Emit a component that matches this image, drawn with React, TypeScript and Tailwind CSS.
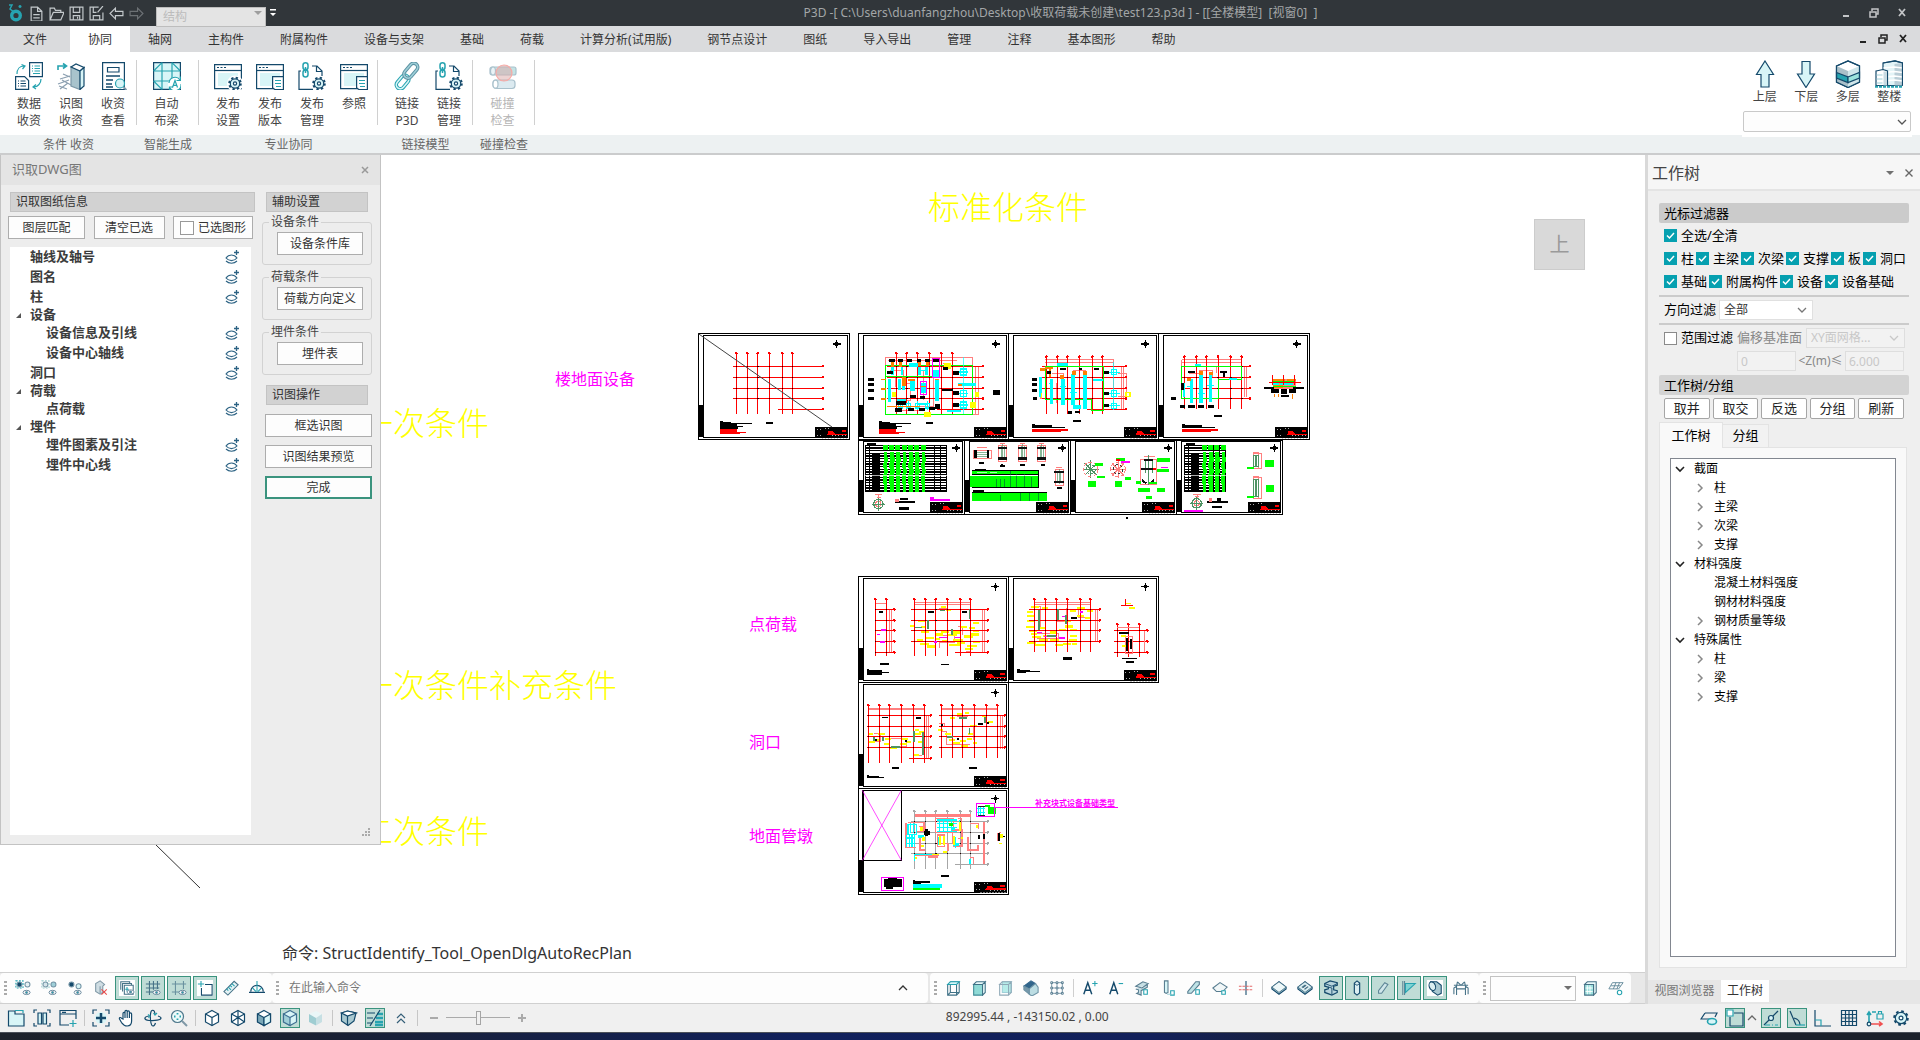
import type { ReactNode } from "react";

// ── Palette shared by the icon drawings ──────────────────────────────────────
const N = "#14496b";
const T = "#26a3b0";
const P = "#d8f5f7";
const M = "#9fcfd8";

const uiFont = "font-['Noto_Sans','Noto_Sans_CJK_SC',sans-serif]";

type IconProps = { box?: number; size?: string; children: ReactNode };

function Icon({ box = 18, size = "size-[18px]", children }: IconProps) {
  return (
    <svg viewBox={`0 0 ${box} ${box}`} className={`${size} shrink-0`} fill="none" stroke={N} strokeWidth="1.2" aria-hidden="true">
      {children}
    </svg>
  );
}

function Gear({ x, y, r = 5 }: { x: number; y: number; r?: number }) {
  const step = (2 * Math.PI * (r + 0.8)) / 16;
  return (
    <g>
      <circle cx={x} cy={y} r={r + 0.8} strokeWidth="2" strokeDasharray={`${step} ${step}`} />
      <circle cx={x} cy={y} r={r - 0.3} fill={P} />
      <circle cx={x} cy={y} r={r * 0.32} fill="#fff" />
    </g>
  );
}

// ── Ribbon icons (28px) ──────────────────────────────────────────────────────
const windowShape = (
  <>
    <path d="M.6 2.6h26.8v24H.6z" fill="#fff" />
    <path d="M4 11h20v13H4z" fill={P} stroke="none" />
    <path d="M.6 8.5h26.8" />
    <path d="M3 5.5h2M6.5 5.5h2M10 5.5h2" />
  </>
);

const chainDoc = (
  <>
    <path d="M3 9H1v18.4h14M14 4h5l5 5v5M18.5 4v5.5H24" />
    <g stroke={T} strokeWidth="1.5">
      <rect x="5" y="0.8" width="5" height="7" rx="2.5" />
      <rect x="5" y="8" width="5" height="7" rx="2.5" />
      <path d="M7.5 5v6" />
    </g>
    <Gear x={21} y={21.5} />
  </>
);

const windowDoc = (
  <>
    {windowShape}
    <path d="M16.6 14.6H27.4v13H19l-2.4-2z" fill="#fff" />
    <path d="M19 18.5h6M19 21.5h6M20 24.5h5" stroke={T} />
  </>
);

const ribbonIcons: Record<string, ReactNode> = {
  data: (
    <>
      <path d="M14.6.6h12.8v14H14.6z" fill="#fff" />
      <path d="M17 4h1M19.5 4h5.5M17 6.5h1M19.5 6.5h5.5M17 9h1M19.5 9h5.5M18 11.5h7" stroke={T} />
      <path d="M.6 14.6h9l4 4v8.8H.6z" fill="#fff" />
      <path d="M3 19h1M5.5 19h5M3 21.5h1M5.5 21.5h5.5M3 24h1M5.5 24h5.5" />
      <path d="M2 12c0-5 3-8 7-8M6.5 2.5 10 4 7.5 7M26 17c0 4-3 8-7 8M21 22.5l-3 2.5 3 2" stroke={T} />
    </>
  ),
  recognise: (
    <>
      <path d="M1 8V4h7M6 1.5 9.5 4 6 6.5" stroke={T} strokeWidth="1.6" />
      <path d="M6 12l7 3M3 17l10-3M5 18l9 5M1 22l11-4M2 24l8 3M3 27l8-6" stroke="#8b9fb0" />
      <path d="M14 5l9 4v18.5L14 24z" fill="#a8c3cc" stroke="#7c98a7" />
      <path d="M14 5l5-3 8 3.5-4 3.5z" fill="#fff" />
      <path d="M23 9l4-3.5V24l-4 3.5z" fill={P} />
    </>
  ),
  review: (
    <>
      <path d="M3.6.6h21.8v27H3.6z" fill="#fff" />
      <path d="M8.5 5.5h11.5v4.5H8.5z" />
      <path d="M7 14h14M7 18h7M7 22h6M7 25h7" strokeWidth="1.5" />
      <circle cx="21" cy="21.5" r="4.5" fill={P} stroke={T} />
      <path d="M24.5 25l3 3" stroke="#7c98a7" strokeWidth="1.8" />
    </>
  ),
  autoBeam: (
    <>
      <path d="M.6.6h26.8v26.8H.6z" fill={P} />
      <path d="M.6 9h26.8M.6 19h26.8M9 .6v26.8M19 .6v26.8M.6 9 9 .6M19 .6 27.4 9M.6 19 9 27.4" stroke={T} />
      <circle cx="22" cy="22" r="7" fill="#fff" stroke="none" />
      <path d="M16 21a6 6 0 0 1 11-3M28 22a6 6 0 0 1-11 4M27.5 14.5v4h-4M16.5 28v-3h3.5" stroke={T} />
      <path d="M19.5 25.5 22 18.5l2.5 7M20.3 23.3h3.4" stroke={T} />
    </>
  ),
  publishSet: (
    <>
      {windowShape}
      <circle cx="21" cy="21.5" r="8" fill="#fff" stroke="none" />
      <Gear x={21} y={21.5} />
    </>
  ),
  windowDoc,
  chainDoc,
  chain: (
    <g transform="rotate(-50 14 14)" strokeWidth="3.6">
      <rect x="-1" y="10.5" width="15" height="8" rx="4" stroke={T} />
      <rect x="-1" y="10.5" width="15" height="8" rx="4" stroke={P} strokeWidth="1.6" />
      <rect x="12" y="9.5" width="17" height="8" rx="4" stroke="#5d93a3" />
      <rect x="12" y="9.5" width="17" height="8" rx="4" stroke={M} strokeWidth="1.6" />
    </g>
  ),
  clash: (
    <>
      <rect x="1" y="5" width="26" height="8" rx="2" fill="#c2e3e4" stroke="#a9c1cc" />
      <rect x="4" y="18" width="22" height="8.5" rx="3" fill="#dceaf0" stroke="#a9c1cc" />
      <ellipse cx="4" cy="9" rx="2.5" ry="4" fill="#eaf3f6" stroke="#a9c1cc" />
      <ellipse cx="6.5" cy="22.2" rx="2.5" ry="4" fill="#fff" stroke="#a9c1cc" />
      <circle cx="15" cy="11" r="8" fill="#d9a8a5" fillOpacity=".5" stroke="#f7aaa6" />
    </>
  ),
  up: <path d="M14 1l8.5 13.5H18V27h-8V14.5H5.5z" fill={P} />,
  down: <path d="M14 27.5 22.5 14H18V1.5h-8V14H5.5z" fill={P} />,
  layers: (
    <>
      <path d="M2.5 6 14 1l11.5 5v16L14 27.5 2.5 22z" fill="#fff" />
      <path d="M2.5 6 14 11v16L2.5 22z" fill="#a9bfc8" stroke="none" />
      <path d="M14 11 25.5 6v16L14 27.5z" fill="#cfe6ea" stroke="none" />
      <path d="M2.5 12.5 14 17v5.5L2.5 18z" fill={T} />
      <path d="M14 17l11.5-4.5V18L14 22.5z" fill="#9be3dc" />
      <path d="M2.5 6 14 1l11.5 5v16L14 27.5 2.5 22z" />
    </>
  ),
  tower: (
    <>
      <path d="M8 3 20 .8 27.5 3v22.5H8z" fill="#e3f4f7" />
      <path d="M19.5 4 27.5 3v22.5h-8z" fill="#b9cdd6" stroke="none" />
      <path d="M8.5 8l11-1 8 1M8.5 12.5l11-1 8 1M8.5 17l11-1 8 1M8.5 21l11-1 8 1" stroke="#fff" strokeWidth="1.6" />
      <path d="M8 3 20 .8 27.5 3v22.5" />
      <path d="M1 11l7-1.5 4.5 1.5v14.5H1z" fill="#fff" />
      <path d="M1.5 15h6M1.5 19h6M1.5 23h6" stroke={M} />
      <path d="M8.5 11.5h3.5v14H8.5z" fill="#c9dbe2" stroke="none" />
      <path d="M0 26.8h28" stroke={T} strokeWidth="2" strokeDasharray="3 1" />
    </>
  ),
};

// ── Small tool icons (18px) ──────────────────────────────────────────────────
const hex = "M9 1.5 15.5 5v8L9 16.5 2.5 13V5z";
const eye = (x: number, y: number) => (
  <g transform={`translate(${x} ${y})`} stroke="#5f8196" strokeWidth="1">
    <ellipse cx="0" cy="0" rx="4" ry="2.4" fill="#fff" />
    <circle cx="0" cy="0" r="1.2" fill={T} />
  </g>
);
const dot = (x: number, y: number, fill: string) => <circle cx={x} cy={y} r="2.8" fill={fill} stroke="#7394a5" />;

const smallIcons: Record<string, ReactNode> = {
  selA: <>{dot(5, 5, N)}<path d="M1 1h8v8H1z" stroke={T} strokeDasharray="2 1.5" />{dot(14, 5, "#e6f1f4")}{eye(13, 14)}</>,
  selB: <>{dot(5, 5, "#d5e5ea")}<path d="M1 1h8v8H1z" stroke="#9cc" strokeDasharray="2 1.5" />{dot(14, 5, M)}{eye(13, 14)}</>,
  selC: <>{dot(5, 5, N)}{dot(13, 7, P)}{eye(12, 14)}</>,
  bodyDel: <><path d="M8 1 3 4v9l5 3 3-2V7l2-2z" fill="#cfdde3" stroke="#7f98a6" /><path d="M8 7v8" stroke="#7f98a6" /><path d="m9.5 10.5 6 6m0-6-6 6" stroke="#e84a4a" /></>,
  layerEye: <><path d="M0 0h18v18H0z" fill="#fff" stroke="none" /><path d="M2 11V2h10v2M4 13V4h10v2M6 6h10v10H6z" stroke="#467287" /><path d="M9 8v5m-2-2.5h4" stroke={T} />{eye(13, 13.5)}</>,
  gridEye: <><path d="M5 1v16M9.5 1v10M14 1v9M1 4.5h16M1 9h15M1 13.5h8" stroke="#467287" />{eye(13, 14)}</>,
  axisEye: <><path d="M5 1v16M14 1v9M1 4.5h16M1 13.5h8" stroke="#69909f" />{eye(13, 14)}</>,
  axisAdd: <><path d="M0 0h18v18H0z" fill="#fff" stroke="none" /><path d="M9 5h8v12H5V9" /><path d="M4.5 1v7M1 4.5h7" stroke={T} /></>,
  ruler: <><path d="M1 13 12.5 1.5l4.5 4L5.5 17z" fill="#e5f3f5" stroke="#467287" /><path d="m4 10 2 2m0-4 3 3m-1-5 2 2m0-4 3 3" stroke={T} /></>,
  protractor: <><path d="M2 13a7 7 0 0 1 14 0M0 14h18" strokeWidth="1.4" /><path d="M9 1v12M4 9l4 4m6-4-4 4" stroke={T} /></>,
  cubeWire: <><path d="M3 5h10v12H3zM6 2h10v12l-3 3M6 2v12h10M6 14l-3 3" stroke="#3f7186" /><path d="M3 5h10l3-3H6z" fill={P} stroke={T} /></>,
  cubeSolid: <><path d="M3 5h10v12H3z" fill="#8fdad6" stroke="#3f8a96" /><path d="m3 5 3-3h10l-3 3zM16 2v12l-3 3V5z" fill="#eafafa" stroke="#3f7186" /></>,
  cubeBack: <><path d="M6 2h10v12H6z" fill="#b6ece9" stroke={M} /><path d="M3 5h10v12H3zm0 0 3-3h10l-3 3zM16 2v12l-3 3" stroke="#8fa9b7" /></>,
  cubeDark: <><path d="m1 7 8-6 5 3-7 6z" fill="#31658b" stroke="#31658b" /><path d="m7 10 7-6 3 4v6l-7 4-3-2z" fill="#bcdde3" stroke="#6d93a5" /><path d="M1 7v4l6 5v-6z" fill="#7698ab" stroke="#6d93a5" /></>,
  lattice: <><path d="M3 3h12v12H3zM9 3v12M3 9h12" stroke="#6f8fa1" strokeWidth="1" /><path d="M2 2h2v2H2zm6 0h2v2H8zm6 0h2v2h-2zM2 8h2v2H2zm6 0h2v2H8zm6 0h2v2h-2zM2 14h2v2H2zm6 0h2v2H8zm6 0h2v2h-2z" fill="#fff" stroke="#4b7388" strokeWidth="1" /></>,
  fontUp: <><path d="M2 16 6.5 3 11 16M3.5 11.5h6" strokeWidth="1.6" /><path d="M14.5 1v6M11.5 4h6" stroke={T} /></>,
  fontDown: <><path d="M2 16 6.5 3 11 16M3.5 11.5h6" strokeWidth="1.6" /><path d="M12 4h5" stroke={T} /></>,
  beamTag: <><path d="m2 7 8-5 6 2-7 5zM2 10l3 1v3l-2 1 5 2v-5l7-4V5" fill="#c7dfe4" stroke="#587d90" /><path d="M11 11h4v5h-4z" fill="#fff" stroke={T} /></>,
  colTag: <><path d="M5 1h4v13l-2 1-2-1z" fill={P} stroke="#587d90" /><path d="M12 12h4v5h-4z" stroke={T} /><path d="M8 16h4" stroke={M} /></>,
  braceTag: <><path d="m2 13 9-11h4v3L6 15H2z" fill="#bfe3e6" stroke="#587d90" /><path d="M11 11h4v5h-4z" fill="#fff" stroke={T} /></>,
  slabTag: <><path d="m1 9 8-6 8 5-5 5H5z" fill="#f1f7f8" stroke="#587d90" /><path d="M11 12h4v4h-4z" fill="#fff" stroke={T} /></>,
  joint: <><path d="M9 1v16" /><path d="M1 7h16M1 11h16" stroke="#e46a6a" strokeDasharray="3 1" /></>,
  slab: <><path d="m1 8 8-6 8 6v2l-8 6-8-6z" fill="#a9ccd4" /><path d="m1 8 8-6 8 6-8 6z" fill="#eef8f9" stroke="#467287" strokeWidth="1" /></>,
  slabHole: <><path d="m1 8 8-6 8 6v2l-8 6-8-6z" fill="#a9ccd4" /><path d="m1 8 8-6 8 6-8 6z" fill="#dbeef1" stroke="#467287" strokeWidth="1" /><path d="m5 8 4-3 4 3-4 3z" fill="#467287" stroke="none" /><path d="M7 10l5-4" stroke="#fff" /></>,
  beam: <><path d="m2 4 6-3 8 2v3l-4 1v4l4 1v2l-6 3-8-3v-3l4-1V8L2 7z" fill="#b7d4dc" strokeWidth="1.4" /><path d="m2 4 8 3 6-3M6 8l4 1v7" strokeWidth="1" /></>,
  column: <><path d="M6 3.5 9 1l3 2.5v11L9 17l-3-2.5z" fill="#dbeef1" strokeWidth="1.3" /><path d="M6 4l3 2 3-2" strokeWidth="1" /></>,
  brace: <path d="m4 12 7-9 3.5 2L7.5 15 4 15z" fill="#cfe6ea" stroke="#5d8596" />,
  flag: <><path d="M4 1v16M2 1v16" stroke="#5d8596" /><path d="M5 4h11L5 14z" fill="#7fd3d3" stroke={T} /></>,
  pipe: <><path d="M0 0h18v18H0z" fill="#fff" stroke="none" /><path d="M4 2h7l5 4v9l-4 2-6-4z" fill="#a9c8d1" /><ellipse cx="6" cy="7" rx="3.5" ry="5" fill="#dbeef1" transform="rotate(-20 6 7)" /></>,
  truss: <path d="M4 17V7l1-5M14 17V7l-1-5M1 6h16M4 10h10M1 16V9l3-2m13 9V9l-3-2M5 2l4 4 4-4" stroke="#467287" />,
  sheetGrid: <><path d="m3 5 3-3h10v12l-3 3V5z" fill="#eafafa" stroke="#467287" /><path d="M3 5h10v12H3z" fill="#9de2df" stroke="#467287" /><path d="M6 6v10m3-10v10M4 9h8M4 13h8" stroke="#fff" strokeWidth="1" /></>,
  sheetEye: <><path d="m5 3-4 7h11l5-7zM3.5 6.5H14M9 3l-3 7m7-7-3 7" stroke="#5d8596" strokeWidth="1" /><circle cx="13" cy="14" r="2.5" fill="#fff" stroke={T} /></>,
  folder: <><path d="M1.5 2H8v3h9v12H1.5z" fill={P} /><path d="M8 1.5h8V4" stroke={T} /></>,
  tiles: <><path d="M5 4h3.5v11H5zM10 4h3.5v11H10z" fill={P} /><path d="M4 1H1v3m0 10v3h3M14 1h3v3m0 10v3h-3" /></>,
  windowAdd: <><path d="M17 10V1.5H1V16h9M1 5h16M3 3.3h4" /><path d="M14 11v7m-3.5-3.5h7" stroke={T} /></>,
  fit: <><path d="M1 5V1h4M13 1h4v4M1 13v4h4m8 0h4v-4" /><circle cx="9" cy="9" r="6" fill={P} stroke="none" /><path d="M9 4v10M4 9h10" strokeWidth="2.5" /></>,
  hand: <path d="M5 10V4.5c0-1.5 2-1.5 2 0V9 2.5c0-1.5 2.2-1.5 2.2 0V9 3c0-1.5 2.2-1.5 2.2 0v6-4c0-1.5 2.2-1.5 2.2 0v7c0 3-1.5 5-4.5 5S5 15.5 3.5 13.5L1.5 10c-.5-1.5 1-2 2-.8z" fill="#fff" />,
  orbit: <><path d="M11 5c-.5-5-4-5-4.5 0-.5 6 .5 12 2.5 12 1.5 0 2-1.5 2.5-3M5 7c-6 1-5 4 0 4.5 6 .5 12-.5 12-2.5 0-1-1.5-1.5-3-2" /><path d="m9.5 4 1.5 2 2-2M4 5.5 6 7 4.5 9" stroke={T} /></>,
  zoom: <><circle cx="7.5" cy="7.5" r="6" fill="#eefafa" stroke="#4e788c" /><path d="M7.5 4v1.5m0 4V11M4 7.5h1.5m4 0H11" stroke={T} strokeWidth="1.8" /><path d="m12 12 5 5" strokeWidth="2" stroke="#7f98a6" /></>,
  isoWire: <><path d={hex} fill="#fff" /><path d="M2.5 5 9 8.5 15.5 5M9 8.5v8" /></>,
  isoFull: <><path d={hex} fill="#fff" /><path d="M2.5 5 9 8.5 15.5 5M9 1.5v15M2.5 13 9 8.5l6.5 4.5" /></>,
  isoHalf: <><path d={hex} fill="#fff" /><path d="M2.5 5 9 8.5v8L2.5 13z" fill="#7ba8b8" /><path d="M9 8.5 15.5 5v8L9 16.5z" fill={P} /></>,
  isoShade: <><path d={hex} fill={P} stroke="#3f7093" /><path d="M2.5 5 9 8.5v8L2.5 13z" fill={M} stroke="#3f7093" /><path d="M9 8.5 15.5 5" stroke="#3f7093" /></>,
  isoSolid: <g stroke="none"><path d="M2 5 9 2l6 3-6 4z" fill="#eaf6f7" /><path d="M2 5l7 4v7.5L2 13z" fill="#9fcdd2" /><path d="m9 9 6-4v8l-6 3.5z" fill="#c6dfe3" /></g>,
  clip: <><path d="m1.5 4 6-2L16 4l-2 8-6 4.5L1.5 12z" fill="#a8c8d0" /><path d="m1.5 4 6-2L16 4 7.5 7z" fill="#fff" /><path d="M7.5 7v9" /></>,
  hatch: <><path d="M1 4h8M1 9h6M1 14h5" /><path d="M11 5h6M10 9h7M9 13h8M9 16h8" stroke={T} strokeWidth="2.4" /><path d="M4 17 14 1" /></>,
  collapse: <path d="m5 9 4-4 4 4M5 14l4-4 4 4" stroke="#355f78" />,
  planeEye: <><path d="m5 4-4 6h9m5-6H5m10 0h2l-2 4" /><ellipse cx="12" cy="12.5" rx="4.5" ry="3" fill={P} stroke={T} strokeWidth="1.6" /></>,
  snapBox: <><path d="M8 4h9v13H4V8" /><path d="M1 1h6v6H1z" fill="#fff" stroke={T} /></>,
  snapMid: <><path d="M2 16 16 2" /><circle cx="9" cy="9" r="2.5" fill={P} /><path d="M3 16h13" stroke={T} strokeDasharray="5 2 1 2" /></>,
  snapAngle: <><path d="M2 2 8 16M6 9c4 1 6 4 6 7" /><path d="M8 16h9" stroke={T} /></>,
  ortho: <><path d="M1 1v16h16" /><path d="M1 11h6v6" stroke={T} /></>,
  grid: <path d="M1.5 1.5h15v15h-15zM5.5 1v16M9 1v16M12.5 1v16M1 5.5h16M1 9h16M1 12.5h16" />,
  lockAxis: <><path d="M3 16V4M1 6l2-3 2 3M6 3h4" stroke={T} strokeWidth="1.6" /><path d="M5 15h10M13 12.5l3 2.5-3 2" stroke="#f05050" strokeWidth="1.6" /><circle cx="3" cy="15" r="1.8" fill={P} /><path d="M11 5h6v5h-6zM12.5 5V2.5h3V5" stroke={T} /></>,
  gear: <Gear x={9} y={9} r={6} />,
};

const caret = (
  <svg viewBox="0 0 8 4" className="h-1 w-2 fill-[#707070]" aria-hidden="true"><path d="M0 0h8L4 4z" /></svg>
);
const chevron = (
  <svg viewBox="0 0 10 6" className="h-[6px] w-[10px] fill-none stroke-current" aria-hidden="true"><path d="m1 1 4 4 4-4" strokeWidth="1.3" /></svg>
);

// ── Title bar ────────────────────────────────────────────────────────────────
const quickIcons: { label: string; art: ReactNode; faint?: boolean }[] = [
  { label: "新建", art: <path d="M2 1h6l4 4v9H2zM8 1v4h4M4 8h6M4 11h6" /> },
  { label: "打开", art: <path d="M1 13V2h4l1 2h5v2M1 13 4 6h10l-3 7z" /> },
  { label: "保存", art: <path d="M1 1h12v12H1zM4 1v5h6V1M4 13V9h6v4M8 10v2" /> },
  { label: "另存为", art: <path d="M9 1H1v12h12V6M4 1v5h3M4 13V9h6v4M13 0 8 6" /> },
  { label: "撤销", art: <path d="M1 7l5-5v3h7v4H6v3z" /> },
  { label: "重做", art: <path d="M13 7 8 2v3H1v4h7v3z" />, faint: true },
];

function WindowControls({ tone }: { tone: string }) {
  return (
    <>
      <button aria-label="最小化" className={tone}><svg viewBox="0 0 10 10" className="size-[10px]"><path d="M2 7h6v2H2z" fill="currentColor" /></svg></button>
      <button aria-label="还原" className={tone}><svg viewBox="0 0 10 10" className="size-[10px]" fill="none" stroke="currentColor" strokeWidth="1.5"><path d="M3 3V1h6v5H7M1 4h6v5H1z" /></svg></button>
      <button aria-label="关闭" className={tone}><svg viewBox="0 0 10 10" className="size-[10px]" fill="none" stroke="currentColor" strokeWidth="1.8"><path d="m2 1 6 7m0-7L2 8" /></svg></button>
    </>
  );
}

function TitleBar() {
  return (
    <header className="flex h-[26px] shrink-0 items-center bg-[#31363a]">
      <svg viewBox="0 0 16 18" className="ml-2 h-[18px] w-4 shrink-0" aria-hidden="true">
        <circle cx="8" cy="11.5" r="4.3" fill="none" stroke={T} strokeWidth="3.4" />
        <path d="M1 1h3L2 5l4 3M12 1v3m-1.5-1.5h3" fill="none" stroke={T} strokeWidth="1.5" />
      </svg>
      <div className="ml-[2px] flex">
        {quickIcons.map((q) => (
          <button key={q.label} aria-label={q.label} className="flex w-5 justify-center">
            <svg viewBox="0 0 14 14" className={`size-[15px] fill-none stroke-[#c4c9cc] ${q.faint ? "opacity-40" : ""}`} strokeWidth="1.1">{q.art}</svg>
          </button>
        ))}
      </div>
      <div className="relative ml-[10px] h-5 w-[110px] shrink-0">
        <select aria-label="专业" disabled className="size-full appearance-none border border-[#bdbdbd] bg-[#e4e4e4] pl-[6px] text-xs leading-4 text-[#bcbcbc] opacity-100">
          <option>结构</option>
        </select>
        <span className="pointer-events-none absolute top-2 right-1 opacity-60">{caret}</span>
      </div>
      <svg viewBox="0 0 6 8" className="ml-1 h-2 w-[6px] fill-white" aria-hidden="true"><path d="M0 0h6v1.5H0zM0 4h6L3 7z" /></svg>
      <h1 className="flex-1 truncate pl-1 text-center text-xs whitespace-pre text-[#a3a6a8]">
        {"P3D -[ C:\\Users\\duanfangzhou\\Desktop\\收取荷载未创建\\test123.p3d ] - [[全楼模型]  [视窗0]  ]"}
      </h1>
      <div className="flex gap-[18px] pr-[13px]"><WindowControls tone="flex text-[#c3c5c7]" /></div>
    </header>
  );
}

// ── Menu ─────────────────────────────────────────────────────────────────────
const menus = ["文件", "协同", "轴网", "主构件", "附属构件", "设备与支架", "基础", "荷载", "计算分析(试用版)", "钢节点设计", "图纸", "导入导出", "管理", "注释", "基本图形", "帮助"];

function MenuBar() {
  return (
    <nav className="flex h-[26px] shrink-0 bg-[#dadbdd] text-xs text-[#333]">
      {menus.map((m, i) => (
        <button key={m} className={`pt-[2px] ${i === 0 ? "w-[70px]" : "px-[18px]"} ${i === 1 ? "bg-white" : ""}`}>{m}</button>
      ))}
      <div className="ml-auto flex items-center gap-[10px] pr-[12px]"><WindowControls tone="flex text-[#222]" /></div>
    </nav>
  );
}

// ── Ribbon ───────────────────────────────────────────────────────────────────
type RibbonItem = { icon: string; top: string; bottom?: string; disabled?: boolean };
const ribbon: { title: string; items: RibbonItem[] }[] = [
  {
    title: "条件 收资",
    items: [
      { icon: "data", top: "数据", bottom: "收资" },
      { icon: "recognise", top: "识图", bottom: "收资" },
      { icon: "review", top: "收资", bottom: "查看" },
    ],
  },
  { title: "智能生成", items: [{ icon: "autoBeam", top: "自动", bottom: "布梁" }] },
  {
    title: "专业协同",
    items: [
      { icon: "publishSet", top: "发布", bottom: "设置" },
      { icon: "windowDoc", top: "发布", bottom: "版本" },
      { icon: "chainDoc", top: "发布", bottom: "管理" },
      { icon: "windowDoc", top: "参照" },
    ],
  },
  {
    title: "链接模型",
    items: [
      { icon: "chain", top: "链接", bottom: "P3D" },
      { icon: "chainDoc", top: "链接", bottom: "管理" },
    ],
  },
  { title: "碰撞检查", items: [{ icon: "clash", top: "碰撞", bottom: "检查", disabled: true }] },
];

function Ribbon() {
  return (
    <section className="flex h-[103px] shrink-0 border-b-2 border-[#cbcccd] bg-white text-xs">
      {ribbon.map((g) => (
        <div key={g.title} className="flex min-w-[62px] flex-col">
          <div className="flex h-[83px] items-start pt-2">
            <div className={`flex h-[65px] flex-1 border-r border-[#d0d0d0] pt-[2px] pr-[2px] ${g.items.length === 1 ? "justify-center" : "pl-2"}`}>
              {g.items.map((it) => (
                <button key={it.top + it.bottom} disabled={it.disabled} className={`flex w-[42px] flex-col items-center leading-[17px] ${it.disabled ? "text-[#b5b5b5]" : "text-[#444]"}`}>
                  <span className="mb-[5px]"><Icon box={28} size="size-7">{ribbonIcons[it.icon]}</Icon></span>
                  <span>{it.top}</span>
                  <span>{it.bottom}</span>
                </button>
              ))}
            </div>
          </div>
          <div className="h-[18px] bg-[#edf1f2] pt-px text-center leading-[18px] text-[#666]">{g.title}</div>
        </div>
      ))}
      <div className="flex flex-1 flex-col items-end bg-[linear-gradient(#fff_83px,#edf1f2_83px)] pr-2">
        <div className="flex w-[170px] flex-col bg-white pt-2">
          <div className="flex px-[2px] text-[#444]">
            {[["up", "上层"], ["down", "下层"], ["layers", "多层"], ["tower", "整楼"]].map(([icon, label]) => (
              <button key={icon} className="flex flex-1 flex-col items-center leading-[18px]">
                <Icon box={28} size="size-7">{ribbonIcons[icon]}</Icon>
                {label}
              </button>
            ))}
          </div>
          <div className="relative mt-[5px] mb-[5px] ml-px h-[21px] w-[168px] text-[#555]">
            <select aria-label="楼层" className="size-full appearance-none rounded-xs border border-[#c9c9c9] bg-[#fdfdfd]"><option></option></select>
            <span className="pointer-events-none absolute top-2 right-1">{chevron}</span>
          </div>
        </div>
      </div>
    </section>
  );
}

// ── Drawing primitives ───────────────────────────────────────────────────────
const RED = "#ff0000";
const PINK = "#ff8080";
const LIME = "#00ff00";
const CYAN = "#00ffff";
const YEL = "#ffff00";
const MAG = "#ff00ff";
const ORG = "#ff8000";
const DGR = "#4f9364";

// A run of filled bars, written as "x,y,w,h x,y,w,h ..."
function Bars({ fill, at }: { fill: string; at: string }) {
  const d = at
    .split(" ")
    .map((b) => b.split(","))
    .map(([x, y, w, h]) => `M${x} ${y}h${w}v${h}h-${w}z`)
    .join("");
  return <path d={d} fill={fill} />;
}

function Line({ c, d, w = 3 }: { c: string; d: string; w?: number }) {
  return <path d={d} fill="none" stroke={c} strokeWidth={w} />;
}

type GridProps = { xs: number[]; ys: number[]; x0: number; x1: number; y0: number; y1: number; short?: [number, number]; color?: string };

function AxisGrid({ xs, ys, x0, x1, y0, y1, short, color = RED }: GridProps) {
  return (
    <g>
      {xs.map((x) => <Line key={x} c={color} d={`M${x} ${y0}V${y1}`} />)}
      {ys.map((y) => <Line key={y} c={color} d={`M${x0} ${y}H${x1}`} />)}
      {short && <Line c={color} d={`M${short[0]} ${short[1]}H${x1}`} />}
      {xs.map((x) => <circle key={x} cx={x} cy={y0} r="4" fill={color} />)}
      {[...ys, ...(short ? [short[1]] : [])].map((y) => <circle key={y} cx={x1} cy={y} r="4" fill={color} />)}
      {xs.map((x) => ys.map((y) => <rect key={`${x}-${y}`} x={x - 2} y={y - 2} width="5" height="4" fill="#200" />))}
    </g>
  );
}

function Sheet({ x, y, w, h, small }: { x: number; y: number; w: number; h: number; small?: boolean }) {
  const cx = x + w - (small ? 25 : 39);
  const cy = y + (small ? 24 : 31);
  const tx = x + w - 104;
  const ty = y + h - 37;
  return (
    <g>
      <path d={`M${x} ${y}h${w}v${h}h-${w}zM${x + 14} ${y + 5}h${w - 20}v${h - 11}h-${w - 20}z`} fill="none" stroke="#000" strokeWidth="3" />
      <rect x={x} y={y + h - 103} width="14" height="97" />
      <path d={`M${cx - 12} ${cy}h24M${cx} ${cy - 12}v24`} stroke="#000" strokeWidth="4" />
      <rect x={cx - 5} y={cy - 5} width="10" height="10" />
      <rect x={tx} y={ty} width="98" height="31" />
      <path d={`M${tx + 5} ${ty + 8}h20M${tx + 30} ${ty + 5}h12M${tx + 6} ${ty + 24}h16M${tx + 50} ${ty + 26}h44`} stroke="#fff" strokeWidth="2" strokeDasharray="3 7" />
      <path d={`M${tx + 34} ${ty + 25}l6-8v-5h14l6 8h36v4h-30z`} fill={RED} />
      <rect x={tx + 80} y={ty + 9} width="13" height="6" fill={RED} />
      <path d={`M${tx + 20} ${ty + 33}h80`} stroke="#aaa" strokeWidth="2" strokeDasharray="5 4" />
    </g>
  );
}

function Notes({ x, y, long }: { x: number; y: number; long?: boolean }) {
  return (
    <g>
      <path d={long ? `M${x} ${y}h8v3h52v4h38v5h-98z` : `M${x} ${y}h8l2 3h24v3h62v3h-44v5h18v4h-16v4h-54z`} />
      <path d={long ? `M${x} ${y + 14}h108v5h-20v3h-88z` : `M${x} ${y + 24}h52v7h26v4h-18v3h-60z`} fill={RED} />
    </g>
  );
}

// Equipment schedule with its green value columns
function Schedule({ x, y, w, cols, from }: { x: number; y: number; w: number; cols: number; from: number }) {
  const rows = Array.from({ length: 17 }, (_, i) => y + 8 + i * 8);
  return (
    <g>
      <rect x={x} y={y} width={w} height="139" fill="#fff" stroke="#000" strokeWidth="3" />
      {rows.map((r) => <Line key={r} c="#000" d={`M${x} ${r}h${w}`} w={4} />)}
      <Line c="#000" d={`M${x + w - 18} ${y}v139M${x + w - 36} ${y}v139M${x + 12} ${y}v139`} />
      <Bars fill="#000" at={`${x + 20},${y + 22},${from - 28},116 ${x + 4},${y - 7},28,8`} />
      {Array.from({ length: cols }, (_, i) => (
        <g key={i}>
          <rect x={x + from + i * 19} y={y} width="15" height="14" fill={LIME} />
          <path d={`M${x + from + 3 + i * 19} ${y + 20}h11v16h3v14h-3v20h3v12h-3v57h-11v-22h-2v-30h2v-20h-2v-14h2z`} fill={LIME} />
        </g>
      ))}
      <Line c="#fff" d={`M${x} ${y + 91}h${w}`} w={2} />
    </g>
  );
}

function Column({ x, y, h = 36 }: { x: number; y: number; h?: number }) {
  return (
    <g>
      <path d={`M${x - 12} ${y - 4}h24v${h + 14}h-24zM${x - 8} ${y - 10}h16`} fill="none" stroke={PINK} strokeWidth="3" />
      <path d={`M${x - 5} ${y}v${h}M${x} ${y - 6}v${h + 12}M${x + 5} ${y}v${h}`} stroke={DGR} strokeWidth="2" />
      <path d={`M${x - 14} ${y + 4}h28M${x - 14} ${y + h}h28`} stroke="#111" strokeWidth="7" />
    </g>
  );
}

function RoundPlan({ x, y }: { x: number; y: number }) {
  return (
    <g fill="none" strokeWidth="3">
      <path d={`M${x - 10} ${y - 28}h22m-11 0v14m-6-6h12`} stroke={PINK} />
      <circle cx={x} cy={y} r="14" stroke={DGR} strokeWidth="4" />
      <circle cx={x} cy={y} r="8" stroke={PINK} />
      <path d={`M${x - 20} ${y}h40M${x} ${y - 18}v38`} stroke={DGR} />
    </g>
  );
}

// ── Upper rows of sheets ─────────────────────────────────────────────────────
function UpperSheets() {
  return (
    <svg x="690" y="320" width="640" height="200" viewBox="0 0 1920 600" shapeRendering="crispEdges">
      <Sheet x={25} y={41} w={454} h={317} />
      <AxisGrid xs={[139, 172, 203, 238, 277, 307]} ys={[139, 172, 205, 236]} x0={130} x1={399} y0={100} y1={281} short={[265, 268]} />
      <path d="M25 41 426 321" stroke="#444" strokeWidth="3" shapeRendering="auto" />
      <Notes x={90} y={304} />
      <Bars fill="#000" at="228,306,20,6" />

      <Sheet x={506} y={41} w={450} h={317} />
      <Line c={PINK} d="M586 112H847V283M586 112V280M595 122H800M865 139V283H750M855 139V283M600 150h40v20h-24v30M640 190h20v50h-30M700 150v90M730 170v90h-40M620 230v40h80M760 130h20v16" />
      <AxisGrid xs={[619, 650, 682, 718, 754, 787]} ys={[139, 172, 205, 236]} x0={590} x1={879} y0={100} y1={281} short={[740, 268]} />
      <Line c={LIME} d="M586 170V283H847V136H586v34h140" w={4} />
      <Line c={MAG} d="M728 116h20v55h-20zM691 184h19v38h-19z" />
      <Bars fill={CYAN} at="604,142,8,24 632,142,8,24 658,128,26,12 684,142,10,24 704,142,10,24 684,150,30,4 730,150,18,20 660,178,16,35 694,188,14,32 736,176,11,66 625,178,7,32 637,178,8,32 594,178,10,68 803,190,55,8 772,269,40,7 680,248,30,6 622,236,26,8" />
      <g fill="none" stroke={CYAN} strokeWidth="4">
        {[[820, 156], [820, 220], [820, 255]].map(([a, b]) => <path key={b} d={`M${a - 15} ${b}h30M${a} ${b - 15}v30M${a - 9} ${b - 9}h18v18h-18z`} />)}
        {[632, 655, 683, 712].map((a) => <path key={a} d={`M${a - 6} 250h12v14h-12zM${a} 244v26`} />)}
        <path d="M820 112V283" strokeWidth="2" />
      </g>
      <Bars fill={ORG} at="604,122,8,18 628,122,8,18 684,120,8,18 708,120,8,18 637,172,10,26 574,176,14,5 574,204,14,5 574,234,14,5 590,257,100,4 803,191,14,7 655,178,20,4 690,198,18,4 735,176,12,4" />
      <Bars fill={YEL} at="762,130,22,16 702,275,22,16 840,246,18,18 856,216,10,14 605,216,12,14" />
      <Bars fill="#000" at="598,117,16,8 623,117,16,8 652,117,14,8 682,117,12,8 704,117,16,8 730,117,18,8 788,153,18,12 788,214,18,12 788,250,18,12 618,243,30,12 660,225,18,10 690,228,16,8 615,265,20,10 655,264,16,10 688,264,16,10 735,252,14,14 535,174,16,9 535,190,16,9 535,207,16,9 535,232,18,9 910,210,20,16 755,206,35,6 590,154,18,8 760,142,14,8 716,262,20,8" />
      <Notes x={567} y={304} />
      <Bars fill="#000" at="708,306,20,6" />

      <Sheet x={956} y={41} w={449} h={317} />
      <Line c={PINK} d="M1066 119h204v150M1066 126h204M1300 140v130M1293 140v130M1285 160h24v70h-24M1050 176v60h20M1086 160h34v12M1150 152h36v20M1100 190v60M1186 180v80" />
      <AxisGrid xs={[1069, 1102, 1132, 1168, 1207, 1237]} ys={[139, 172, 205, 236]} x0={1056} x1={1308} y0={110} y1={281} short={[1190, 268]} />
      <Line c={LIME} d="M1066 139H1240V272h-36V238H1066z" />
      <Line c={CYAN} d="M1270 126V264" w={2} />
      <Bars fill={CYAN} at="1102,130,32,9 1080,176,9,76 1114,176,10,78 1144,162,12,92 1178,158,14,108 1210,177,28,6 1048,172,8,60 1150,255,24,12" />
      <g fill="none" stroke={CYAN} strokeWidth="3">
        {[156, 220, 257].map((b) => <path key={b} d={`M1255 ${b}h34M1271 ${b - 14}v28M1263 ${b - 8}h16v16h-16z`} />)}
        <path d="M1076 190h14M1110 200h18M1140 216h20" />
      </g>
      <Bars fill={ORG} at="1050,145,14,8 1076,148,8,24 1110,164,12,12 1146,152,12,12 1178,152,12,12 1066,142,22,5" />
      <Bars fill="#000" at="1026,174,16,8 1026,190,16,8 1026,207,16,8 1030,231,12,9 1243,153,14,9 1243,216,14,9 1243,252,14,9 1212,145,16,5 1110,144,18,6 1070,154,12,8 1135,273,12,9 1156,273,14,6 1149,300,24,6 1166,145,10,6" />
      <Line c={YEL} d="M1308 218h12v12h-12zM1054 220v14" w={4} />
      <Notes x={1026} y={313} long />

      <Sheet x={1406} y={41} w={453} h={317} />
      <Line c={PINK} d="M1475 119h180M1475 126h180M1474 120v90M1670 140v90M1664 140v90M1496 160h40v16M1528 152h38v20M1500 180v60M1560 180v50M1580 140v20" />
      <AxisGrid xs={[1483, 1519, 1549, 1584, 1622, 1655]} ys={[139, 172, 205, 236]} x0={1476} x1={1680} y0={110} y1={266} />
      <Line c={LIME} d="M1475 139H1654V178H1586V236H1475z" />
      <Bars fill={CYAN} at="1516,132,18,7 1500,176,9,74 1528,160,10,88 1558,164,9,82 1618,174,24,5 1478,190,8,40" />
      <Line c={CYAN} d="M1490 200h20M1524 220h20M1552 196h20" />
      <Bars fill={ORG} at="1526,152,12,12 1556,156,12,10 1490,174,12,8" />
      <Bars fill="#000" at="1443,231,14,9 1493,153,22,5 1590,153,20,5 1600,160,4,10 1470,256,14,8 1494,256,20,8 1524,256,18,8 1554,256,18,8 1572,285,24,6 1474,190,8,20" />
      <Bars fill={PINK} at="1748,176,70,30" />
      <Bars fill={ORG} at="1750,178,34,6 1790,178,28,6 1750,196,30,8" />
      <Bars fill={CYAN} at="1746,186,20,8 1770,190,40,5" />
      <Line c={LIME} d="M1748 184h66M1750 200h68" />
      <Line c={RED} d="M1747 165v30M1780 165v30M1813 165v30M1736 187h98" />
      <Line c="#000" d="M1722 204h30M1808 204h34" w={4} />
      <Bars fill="#000" at="1744,208,24,10 1772,208,20,14 1796,208,22,10 1772,226,24,5" />
      <Line c={ORG} d="M1754 222v10M1766 222v10M1808 222v14" />
      <Notes x={1476} y={313} long />

      {/* second row: schedules and equipment details */}
      <Sheet x={506} y={360} w={318} h={223} small />
      <Schedule x={526} y={376} w={244} cols={7} from={52} />
      <RoundPlan x={565} y={552} />
      <Bars fill="#000" at="616,543,58,5 630,534,24,6 628,562,28,7" />
      <Bars fill={PINK} at="614,536,12,10" />
      <Bars fill={MAG} at="720,532,12,10 720,538,60,5" />

      <Sheet x={824} y={360} w={318} h={223} small />
      <Line c={PINK} d="M850 392h54v24h-54zM862 382h28" />
      <Line c={DGR} d="M856 396h40M856 402h40M856 408h40" w={2} />
      <Bars fill="#000" at="852,390,8,24 890,390,8,24 867,427,16,5 930,435,14,5 932,432,8,4 990,433,14,6 1052,433,14,6 1100,501,16,6 854,447,34,5 850,510,32,5" />
      <Column x={938} y={379} />
      <Column x={998} y={379} />
      <Column x={1055} y={379} />
      <Column x={1107} y={452} h={34} />
      <Bars fill={LIME} at="840,468,206,34 845,452,200,14 845,517,226,26" />
      <Line c="#000" d="M845 463H1046M845 452H1046V502H845M845 517H1071" />
      <Line c="#063" d="M920 476v26M932 476v26M944 476v26M962 452v50M980 463v39M1004 463v39M1024 470v32M990 520v22M1018 520v22M1044 520v22M930 524v18" w={2} />
      <Line c="#fff" d="M860 457h30M900 457h20M866 467h60M940 467h90" w={2} />

      <Sheet x={1142} y={360} w={318} h={223} small />
      <g fill="none" strokeWidth="3">
        {[[1202, 448], [1284, 448]].map(([a, b], i) => (
          <g key={a}>
            <path d={`M${a - 24} ${b}h48M${a} ${b - 28}v54M${a - 18} ${b - 18}l36 36M${a + 18} ${b - 18}l-36 36`} stroke={i ? PINK : DGR} />
            <circle cx={a} cy={b} r="14" stroke={i ? "#333" : DGR} strokeDasharray="8 6" />
            <circle cx={a} cy={b} r="22" stroke={PINK} strokeDasharray="10 6" />
          </g>
        ))}
        <path d="M1350 418h48v76h-48zM1362 410h32" stroke={PINK} />
        <path d="M1375 405v90M1366 420v40M1386 420v40" stroke={DGR} />
        <path d="M1362 420h28M1352 447h40M1356 480l12 10M1392 480l-12 10" stroke="#111" strokeWidth="6" />
      </g>
      <Bars fill={LIME} at="1216,428,22,9 1222,467,24,8 1193,484,26,17 1278,414,28,8 1306,472,16,7 1274,484,22,18 1402,413,38,12 1400,446,38,11 1344,505,36,12 1402,505,24,12 1338,484,14,8 1368,528,18,8 1376,485,24,8" />
      <Bars fill={MAG} at="1294,423,26,5 1414,440,20,5" />
      <Bars fill={RED} at="1278,418,12,6 1388,444,10,5" />

      <Sheet x={1460} y={360} w={318} h={223} small />
      <Schedule x={1483} y={376} w={124} cols={4} from={52} />
      <RoundPlan x={1520} y={550} />
      <Bars fill="#000" at="1552,544,62,5 1580,534,14,8 1566,557,30,8" />
      <Bars fill={PINK} at="1558,535,8,12" />
      <Bars fill={MAG} at="1482,571,58,5" />
      {[[400, 44], [472, 62]].map(([b, l]) => (
        <g key={b} fill="none" strokeWidth="3">
          <path d={`M1690 ${b}h24v${l}h-24zM1704 ${b}v${l}M1688 ${b - 2}h20`} stroke={PINK} />
          <path d={`M1690 ${b + 6}h16v${l - 10}h-16zM1698 ${b + 4}v${l - 6}`} stroke={DGR} strokeWidth="4" />
        </g>
      ))}
      <Bars fill={LIME} at="1725,420,26,20 1672,440,20,6 1728,495,24,22 1672,527,20,8" />
      <Bars fill="#000" at="1308,591,6,6" />
    </svg>
  );
}

// Clusters of load marks and their leaders
const loadMarks =
  "510,165,14,6 534,150,24,7 544,168,14,6 544,182,22,7 556,200,26,7 530,208,20,6 540,218,28,7 560,226,28,7 584,190,26,7 604,182,22,7 620,192,32,7 636,184,28,7 640,206,30,7 606,210,18,6 626,222,34,7 650,216,24,7 672,196,26,7 690,190,26,7 698,212,22,7 682,224,28,7 700,156,16,6 676,234,22,7 604,107,14,6 618,118,14,6 660,168,20,7 688,170,16,6 700,180,18,6 584,204,16,6";

// ── Lower sheets ─────────────────────────────────────────────────────────────
function LowerSheets() {
  return (
    <svg x="740" y="570" width="430" height="340" viewBox="0 0 1290 1020" shapeRendering="crispEdges">
      <Sheet x={355} y={19} w={450} h={318} />
      <Line c={PINK} d="M406 100h34M448 118v130M455 118v130M524 97h168M524 102h168M726 118v130M733 118v130M598 116h20v8M546 150h20v26M600 196h44v20h-46v18M654 168h12v28M676 200h16v44h-14" />
      <AxisGrid xs={[406, 439]} ys={[118, 151, 181, 214, 247]} x0={404} x1={463} y0={88} y1={257} />
      <Bars fill={YEL} at={loadMarks} />
      <AxisGrid xs={[523, 556, 587, 622, 661, 691]} ys={[118, 151, 181, 214]} x0={514} x1={743} y0={88} y1={257} short={[646, 247]} />
      <Bars fill={MAG} at="412,192,8,4 424,178,14,4 420,212,16,6 598,200,22,4 646,200,14,4 582,212,8,8" />
      <Line c={DGR} d="M526 173h20M564 150v26M688 118v30M600 122h16M636 178v16" w={4} />
      <Bars fill="#000" at="418,123,10,5 420,280,26,4 564,124,18,4 604,281,22,4 667,124,14,5" />
      <path d="M381 297h6v3h40v5h20v3h-22v7h-44z" />

      <Sheet x={805} y={19} w={450} h={318} />
      <Line c={PINK} d="M883 97h168M883 102h168M1066 118v94M1073 118v94M880 108h20v70M886 190h70v14h-66M950 104v50h30v-40M960 150h22v44M1016 116v26h30" />
      <Bars
        fill={YEL}
        at="874,108,22,7 862,122,16,6 862,134,20,7 860,150,22,7 858,168,26,7 866,180,24,7 872,190,20,6 876,198,28,7 896,208,28,7 862,216,26,7 886,222,28,7 908,194,26,7 930,206,28,7 944,222,26,7 956,176,22,7 972,150,20,7 986,208,26,7 990,176,20,7 990,194,22,7 990,120,18,7 1012,112,24,7 1010,134,22,7 1034,142,18,6 1042,120,16,6 976,166,24,7 906,112,18,6 930,184,18,7 900,170,14,6 968,218,24,7 996,218,16,6"
      />
      <AxisGrid xs={[883, 916, 949, 982, 1021, 1051]} ys={[118, 151, 181, 214]} x0={868} x1={1079} y0={88} y1={245} />
      <Bars fill={MAG} at="890,186,16,4 912,198,14,4 936,198,16,4 958,202,18,4 966,138,12,4 1020,124,10,4" />
      <Line c={DGR} d="M896 120v60M954 118v32M978 134v28M920 198h28" w={6} />
      <Bars fill="#000" at="992,141,18,6 970,262,26,7" />
      <AxisGrid xs={[1132, 1165, 1198]} ys={[181, 214, 247]} x0={1122} x1={1222} y0={163} y1={260} />
      <Line c={PINK} d="M1132 172h66M1214 182v64M1156 200h22v50h-22z" />
      <Bars fill="#000" at="1137,186,30,5 1158,204,5,38 1170,208,5,30 1146,264,44,3 1158,273,24,6" />
      <Bars fill={YEL} at="1144,196,14,6 1146,226,12,6 1158,98,14,5 1166,111,18,5" />
      <Line c={RED} d="M1156 88v20M1144 106h34" />
      <path d="M831 297h8v3h32v4h28v3h-40v3h-28z" />

      <Sheet x={355} y={337} w={450} h={318} />
      <Line c={PINK} d="M386 415h168M386 419h168M558 436v130M565 436v130M402 490h18v24h-18M450 505h50v24h-44M524 556h22M605 415h168M605 419h168M780 436v100M786 436v100M652 440h32M598 460h14v10M606 484h14v38h70M684 470h16v40" />
      <Bars
        fill={YEL}
        at="384,488,16,6 386,512,18,6 414,490,20,6 434,504,20,6 404,506,16,6 432,520,18,6 448,532,22,6 480,518,20,6 486,504,18,6 500,512,12,6 524,476,14,6 524,490,20,6 534,512,16,6 522,552,16,6 538,484,14,6 630,440,16,6 652,429,18,6 676,426,12,6 594,478,14,6 614,488,18,6 626,508,18,6 640,516,20,6 660,510,18,6 680,504,16,6 684,488,14,6 690,466,20,6 664,526,20,6 726,434,16,6 744,452,14,6 698,516,14,6"
      />
      <AxisGrid xs={[385, 418, 448, 484, 520, 553]} ys={[436, 469, 499, 532]} x0={380} x1={572} y0={406} y1={578} short={[508, 565]} />
      <AxisGrid xs={[604, 637, 667, 703, 739, 772]} ys={[436, 469, 499, 532]} x0={598} x1={794} y0={406} y1={563} />
      <Line c={DGR} d="M402 500v14M428 500v14M452 530h28M522 482v34M549 486v70M656 444h24M688 474v18M622 500h16M734 440v20" w={5} />
      <Bars fill="#000" at="426,440,18,4 528,441,14,5 714,460,14,4 456,591,20,5 686,591,24,5 404,508,6,5 494,510,6,5 604,462,6,5 650,504,6,6 742,456,6,5" />
      <path d="M381 615h6v3h30v3h14v3h-50z" />

      <Sheet x={355} y={655} w={450} h={317} />
      <Line c="#000" d="M367 661h117v210H367z" />
      <path d="M367 661 484 871M484 661 367 871" stroke={MAG} strokeWidth="3" strokeOpacity=".7" fill="none" shapeRendering="auto" />
      <AxisGrid color="#a6a6a6" xs={[523, 556, 587, 622, 661, 691]} ys={[754, 787, 820, 850]} x0={514} x1={743} y0={724} y1={896} short={[646, 883]} />
      <Bars fill={PINK} at="524,733,168,7 729,755,6,128" />
      <Line c={PINK} d="M684 800v40h30v-14M690 760h26v18M600 820h24v24M540 800v40h14M690 862h10v20M498 760v72h30M504 758h48v26h-24M586 745h54v42h-54zM592 795h22v34h-22zM636 780h30v48h-26zM654 745h10v60h-10M524 856h74M564 861h30M536 770h20v26" w={4} />
      <Line c={CYAN} d="M504 764h26v30h-26zM500 794v38M508 794v38M516 794v38M524 794v38M590 750h60M590 760h60M590 772h60M590 784h60M598 750v36M610 750v36M622 750v36M634 750v36M646 800v34M658 750v30M596 800v26M612 800v26M524 853h74M524 853v20M690 866v16M512 758v30M520 758v30M498 804h28M498 820h28" w={4} />
      <Bars fill={CYAN} at="534,796,18,8 636,770,10,10 640,820,18,8" />
      <Bars fill={YEL} at="540,770,8,14 546,800,8,12 596,798,6,26 608,798,6,26 640,798,6,26 656,756,6,26 664,800,6,6 544,824,8,8 576,852,20,4 524,862,8,6 708,764,6,10 610,844,10,6" />
      <Bars fill={LIME} at="626,760,14,8 736,704,14,8 744,711,24,20" />
      <Bars fill="#000" at="552,784,18,12 556,778,8,20 714,796,5,12 728,792,6,16 604,915,22,5 774,790,6,24 782,798,12,3" />
      <Bars fill={PINK} at="770,790,4,22 776,786,8,4" />
      <Bars fill={YEL} at="780,792,8,12 776,818,10,3" />
      <Line c={CYAN} d="M714 708v26M722 708v26M730 708v26M710 714h26M710 726h26" />
      <Line c="#222" d="M714 709h22M714 735h22" />
      <Line c={MAG} d="M709 700h55v40h-55zM764 712H1133M424 922h67v40h-67z" />
      <Bars fill="#000" at="432,928,54,24 444,924,26,6 438,950,22,6" />
      <path d="M519 930h6v3h44v5h-26v4h-24z" />
      <Bars fill={CYAN} at="519,942,86,12" />
      <Bars fill={LIME} at="519,953,82,6" />
    </svg>
  );
}

type CanvasNote = { x: number; y: number; text: string };

const headings: CanvasNote[] = [
  { x: 928, y: 219, text: "标准化条件" },
  { x: 361, y: 435, text: "一次条件" },
  { x: 361, y: 697, text: "一次条件补充条件" },
  { x: 361, y: 843, text: "二次条件" },
];

const rowLabels: CanvasNote[] = [
  { x: 555, y: 385, text: "楼地面设备" },
  { x: 749, y: 630, text: "点荷载" },
  { x: 749, y: 748, text: "洞口" },
  { x: 749, y: 842, text: "地面管墩" },
];

function Viewport() {
  return (
    <main className="relative flex-1 overflow-hidden bg-white">
      <svg viewBox="0 155 1645 817" className="absolute top-0 left-0 h-[817px] w-[1645px] font-['Noto_Sans_CJK_SC',sans-serif]" aria-label="模型视图">
        <path d="M155 844 200 888" stroke="#333" strokeWidth="1" />
        {headings.map((n) => (
          <text key={n.y} x={n.x} y={n.y} fontSize="32" fontWeight="300" fill={YEL}>{n.text}</text>
        ))}
        {rowLabels.map((n) => (
          <text key={n.y} x={n.x} y={n.y} fontSize="16" fill={MAG}>{n.text}</text>
        ))}
        <text x="1035" y="806" fontSize="8" fontWeight="700" fill={MAG}>补充块式设备基础类型</text>
        <UpperSheets />
        <LowerSheets />
      </svg>
      <button className="absolute top-[64px] right-[60px] size-[51px] border border-[#ccc] bg-[#d9d9d9] text-xl text-[#9a9a9a]">上</button>
      <p className="absolute bottom-[7px] left-[282px] text-base text-[#333]">命令: StructIdentify_Tool_OpenDlgAutoRecPlan</p>
      <RecognizeDialog />
    </main>
  );
}

// ── DWG recognition dialog ───────────────────────────────────────────────────
const layerRows: { text: string; kind: "leaf" | "group" | "child" }[] = [
  { text: "轴线及轴号", kind: "leaf" },
  { text: "图名", kind: "leaf" },
  { text: "柱", kind: "leaf" },
  { text: "设备", kind: "group" },
  { text: "设备信息及引线", kind: "child" },
  { text: "设备中心轴线", kind: "child" },
  { text: "洞口", kind: "leaf" },
  { text: "荷载", kind: "group" },
  { text: "点荷载", kind: "child" },
  { text: "埋件", kind: "group" },
  { text: "埋件图素及引注", kind: "child" },
  { text: "埋件中心线", kind: "child" },
];

const rowStyles = { leaf: "h-5 pl-5", group: "h-4 pl-[6px]", child: "h-5 pl-9" };
const dlgButton = "h-[23px] border border-[#adadad] bg-[#fdfdfd] text-xs text-[#333]";
const dlgHeading = "h-5 border border-[#c3c3c3] bg-[#d2d2d2] pl-[5px] text-xs leading-[18px] text-[#333]";

function RecognizeDialog() {
  return (
    <section role="dialog" aria-label="识取DWG图" className="absolute top-0 left-0 flex h-[690px] w-[381px] flex-col border border-t-0 border-[#c3c3c3] bg-[#ededed]">
      <div className="flex h-[30px] shrink-0 items-center justify-between bg-[#e4e4e4] px-[11px]">
        <h2 className="text-[13px] text-[#777]">识取DWG图</h2>
        <button aria-label="关闭"><svg viewBox="0 0 8 8" className="size-2" fill="none" stroke="#999" strokeWidth="1.5"><path d="m1 1 6 6m0-6L1 7" /></svg></button>
      </div>
      <div className="flex flex-1 pt-[7px]">
        <div className="flex w-[254px] flex-col pl-[7px]">
          <h3 className={`ml-[2px] ${dlgHeading}`}>识取图纸信息</h3>
          <div className="mt-1 flex justify-between pr-[2px]">
            <button className={`w-[77px] ${dlgButton}`}>图层匹配</button>
            <button className={`w-[71px] ${dlgButton}`}>清空已选</button>
            <label className={`flex w-20 items-center justify-center gap-1 ${dlgButton}`}>
              <input type="checkbox" className="size-[14px] appearance-none border border-[#999] bg-white" />
              已选图形
            </label>
          </div>
          <ul className="mt-2 mr-1 mb-[9px] ml-[2px] flex-1 bg-white text-[13px] font-bold text-[#3c3c3c]">
            {layerRows.map((r) => (
              <li key={r.text} className={`flex items-center pr-3 ${rowStyles[r.kind]}`}>
                {r.kind === "group" && <svg viewBox="0 0 5 5" className="mr-[9px] size-[5px] fill-[#555]" aria-hidden="true"><path d="M5 0v5H0z" /></svg>}
                {r.text}
                {r.kind !== "group" && (
                  <button aria-label={`选择${r.text}图层`} className="ml-auto">
                    <svg viewBox="0 0 14 14" className="size-[14px]" fill="none" stroke="#2d6384" strokeWidth="1.1">
                      <path d="M1 8c3-4 8-4 11 0-3 3.5-8 3.5-11 0zM1 11c3 3 8 3 11 0" />
                      <path d="M11.5 0v5M9 2.5h5" strokeWidth="1.3" />
                    </svg>
                  </button>
                )}
              </li>
            ))}
          </ul>
        </div>
        <div className="ml-[7px] flex w-[110px] flex-col">
          <h3 className={`mx-1 ${dlgHeading}`}>辅助设置</h3>
          <div className="mt-[2px] flex flex-col gap-1">
            {[["设备条件", "设备条件库"], ["荷载条件", "荷载方向定义"], ["埋件条件", "埋件表"]].map(([legend, action]) => (
              <fieldset key={legend} className="h-[51px] rounded-[3px] border border-[#d2d2d2] px-2 text-center text-xs text-[#444]">
                <legend className="mr-auto -ml-[2px] px-[2px] leading-4">{legend}</legend>
                <button className={`mt-[2px] ml-[6px] w-[86px] ${dlgButton}`}>{action}</button>
              </fieldset>
            ))}
          </div>
          <h3 className={`mx-1 mt-[10px] ${dlgHeading}`}>识图操作</h3>
          <div className="mt-[9px] ml-[3px] flex flex-col gap-2">
            <button className={dlgButton}>框选识图</button>
            <button className={dlgButton}>识图结果预览</button>
            <button className="h-[23px] border-2 border-[#3a937e] bg-[#fdfdfd] text-xs text-[#333]">完成</button>
          </div>
          <svg viewBox="0 0 9 9" className="mt-auto mr-[2px] mb-2 size-[9px] self-end fill-[#aaa]" aria-hidden="true">
            <path d="M7 1h2v2H7zM4 4h2v2H4zM7 4h2v2H7zM1 7h2v2H1zM4 7h2v2H4zM7 7h2v2H7z" />
          </svg>
        </div>
      </div>
    </section>
  );
}

// ── Work tree panel ──────────────────────────────────────────────────────────
function Check({ label, checked }: { label: string; checked?: boolean }) {
  return (
    <label className="relative flex items-center gap-1 whitespace-nowrap">
      <input type="checkbox" defaultChecked={checked} className="size-[13px] appearance-none border border-[#8a8a8a] bg-white checked:border-[#06a0b0] checked:bg-[#06a0b0]" />
      {checked && <svg viewBox="0 0 13 13" className="pointer-events-none absolute left-0 size-[13px] fill-none stroke-white" aria-hidden="true"><path d="m3 6.5 2.5 2.5L10 4" strokeWidth="1.5" /></svg>}
      {label}
    </label>
  );
}

const tree: { text: string; depth: 0 | 1; leaf?: boolean }[] = [
  { text: "截面", depth: 0 },
  { text: "柱", depth: 1 },
  { text: "主梁", depth: 1 },
  { text: "次梁", depth: 1 },
  { text: "支撑", depth: 1 },
  { text: "材料强度", depth: 0 },
  { text: "混凝土材料强度", depth: 1, leaf: true },
  { text: "钢材材料强度", depth: 1, leaf: true },
  { text: "钢材质量等级", depth: 1 },
  { text: "特殊属性", depth: 0 },
  { text: "柱", depth: 1 },
  { text: "梁", depth: 1 },
  { text: "支撑", depth: 1 },
];

const panelHeading = "h-5 rounded-xs pl-[5px] leading-5";

function WorkTree() {
  return (
    <aside className="flex w-[275px] shrink-0 flex-col border-l-[3px] border-[#d9d9d9] bg-[#efefef] text-[13px] text-black">
      <div className="flex h-9 shrink-0 items-center border-b-2 border-[#e4e4e4] bg-[#f6f6f6] pt-px pr-[7px] pl-1">
        <h2 className="text-base text-[#444]">工作树</h2>
        <button aria-label="面板菜单" className="ml-auto">{caret}</button>
        <button aria-label="关闭面板" className="ml-[11px]"><svg viewBox="0 0 8 8" className="size-2" fill="none" stroke="#666" strokeWidth="1.4"><path d="m.5.5 7 7m0-7-7 7" /></svg></button>
      </div>
      <div className="flex flex-1 flex-col px-[11px] py-3">
        <h3 className={`bg-[#cbcbcb] ${panelHeading}`}>光标过滤器</h3>
        <div className="flex h-[69px] shrink-0 flex-col pt-px pl-[5px] leading-[23px]">
          <Check label="全选/全清" checked />
          <div className="flex gap-[2px]">{["柱", "主梁", "次梁", "支撑", "板", "洞口"].map((t) => <Check key={t} label={t} checked />)}</div>
          <div className="flex gap-[2px]">{["基础", "附属构件", "设备", "设备基础"].map((t) => <Check key={t} label={t} checked />)}</div>
        </div>
        <div className="mt-[3px] flex h-[30px] items-center gap-[3px] border-y-2 border-[#cbcbcb] pl-[5px]">
          <label htmlFor="direction">方向过滤</label>
          <div className="relative text-[#777]">
            <select id="direction" className="h-5 w-[94px] appearance-none border border-[#e0e0e0] bg-white pl-1 text-xs leading-[18px] text-[#333]"><option>全部</option></select>
            <span className="pointer-events-none absolute top-[7px] right-[6px]">{chevron}</span>
          </div>
        </div>
        <div className="mt-[2px] flex h-[22px] items-center gap-1 pl-[5px]">
          <Check label="范围过滤" />
          <label htmlFor="basePlane" className="whitespace-nowrap text-[#888]">偏移基准面</label>
          <div className="relative text-[#c8c8c8]">
            <select id="basePlane" disabled className="h-5 w-[99px] appearance-none border border-[#dedede] bg-[#f2f2f2] pl-1 text-xs leading-[18px] opacity-100"><option>XY面网格...</option></select>
            <span className="pointer-events-none absolute top-[7px] right-[6px]">{chevron}</span>
          </div>
        </div>
        <div className="mt-[2px] flex items-center gap-[2px] pl-[78px] text-[#888]">
          <input aria-label="Z下限" disabled defaultValue="0" className="h-5 w-[59px] border border-[#dedede] bg-[#f2f2f2] pl-[3px] text-xs text-[#c8c8c8]" />
          <span className="w-[45px] text-center text-xs whitespace-nowrap">&lt;Z(m)≤</span>
          <input aria-label="Z上限" disabled defaultValue="6.000" className="h-5 w-[59px] border border-[#dedede] bg-[#f2f2f2] pl-[3px] text-xs text-[#c8c8c8]" />
        </div>
        <h3 className={`mt-1 bg-[#d3d3d3] ${panelHeading}`}>工作树/分组</h3>
        <div className="mt-[3px] grid grid-cols-5 gap-[3px] px-[5px]">
          {["取并", "取交", "反选", "分组", "刷新"].map((b) => (
            <button key={b} className="h-[21px] rounded-xs border border-[#a6a6a6] bg-white text-[#222]">{b}</button>
          ))}
        </div>
        <div role="tablist" className="relative z-10 mt-[3px] -mb-px flex items-end">
          <button role="tab" aria-selected="true" className="h-[26px] w-16 border border-b-0 border-[#e3e3e3] bg-[#f9f9f9]">工作树</button>
          <button role="tab" className="h-6 w-[46px] border border-l-0 border-[#e3e3e3] bg-[#f2f2f2]">分组</button>
        </div>
        <div className="mr-[2px] flex flex-1 border border-[#e3e3e3] bg-[#f9f9f9] p-[10px]">
          <ul className="flex-1 border border-[#828790] bg-white text-xs">
            {tree.map((t, i) => (
              <li key={i} className={`flex h-[19px] items-center ${t.depth ? "pl-[26px]" : "pl-1"}`}>
                {t.depth === 0 ? (
                  <svg viewBox="0 0 10 10" className="mr-[9px] size-[10px]" fill="none" stroke="#222" strokeWidth="1.6" aria-hidden="true"><path d="m1 3 4 4 4-4" /></svg>
                ) : (
                  <svg viewBox="0 0 7 10" className="mr-[10px] h-[10px] w-[7px]" fill="none" stroke={t.leaf ? "none" : "#888"} strokeWidth="1.5" aria-hidden="true"><path d="m1 1 4 4-4 4" /></svg>
                )}
                {t.text}
              </li>
            ))}
          </ul>
        </div>
      </div>
      <div role="tablist" className="flex h-6 shrink-0 bg-[#e6e6e6] pb-[2px] text-xs">
        <button role="tab" className="w-[73px] text-[#777]">视图浏览器</button>
        <button role="tab" aria-selected="true" className="w-12 bg-white text-[#333]">工作树</button>
      </div>
    </aside>
  );
}

// ── Bottom tool rows ─────────────────────────────────────────────────────────
function Tool({ name, on }: { name: string; on?: boolean }) {
  return (
    <button aria-label={name} aria-pressed={on} className={`flex h-6 w-6 shrink-0 items-center justify-center ${on ? "border border-[#3a937e] bg-[#bfdcd6]" : ""}`}>
      <Icon size="size-4">{smallIcons[name]}</Icon>
    </button>
  );
}

function StatusTool({ name, on }: { name: string; on?: boolean }) {
  return (
    <button aria-label={name} aria-pressed={on} className="flex h-5 w-6 shrink-0 items-center justify-center">
      <span className={`flex size-5 items-center justify-center ${on ? "border border-[#3a937e] bg-[#bfdcd6]" : ""}`}>
        <Icon>{smallIcons[name]}</Icon>
      </span>
    </button>
  );
}

const grip = <span className="mr-[2px] ml-1 h-[15px] w-[3px] shrink-0 bg-[repeating-linear-gradient(#aaa_0_2px,transparent_2px_4px)]" />;
const toolSep = <span className="mx-[2px] h-[18px] w-px shrink-0 bg-[#cfcfcf]" />;

function ToolRow() {
  return (
    <div className="flex h-8 shrink-0 border-y border-[#d0d0d0] bg-[#e8e8e8]">
      <div className="flex items-center gap-[2px] rounded-sm bg-[#fdfdfd] pr-[3px]">
        {grip}
        {["selA", "selB", "selC", "bodyDel"].map((n) => <Tool key={n} name={n} />)}
        {["layerEye", "gridEye", "axisEye", "axisAdd"].map((n) => <Tool key={n} name={n} on />)}
        <Tool name="ruler" />
        <Tool name="protractor" />
      </div>
      <div className="flex flex-1 items-center rounded-sm bg-[#fdfdfd]">
        {grip}
        <input aria-label="命令" placeholder="在此输入命令" className="ml-2 flex-1 bg-transparent text-xs text-[#333] outline-none placeholder:text-[#777]" />
        <button aria-label="展开命令历史" className="mr-5 rotate-180 text-[#333]">{chevron}</button>
      </div>
      <div className="ml-[2px] flex items-center gap-[2px] rounded-sm bg-[#fdfdfd] pr-[6px]">
        {grip}
        {["cubeWire", "cubeSolid", "cubeBack", "cubeDark", "lattice"].map((n) => <Tool key={n} name={n} />)}
        {toolSep}
        {["fontUp", "fontDown", "beamTag", "colTag", "braceTag", "slabTag", "joint"].map((n) => <Tool key={n} name={n} />)}
        {toolSep}
        <Tool name="slab" />
        <Tool name="slabHole" />
        {["beam", "column", "brace", "flag", "pipe"].map((n) => <Tool key={n} name={n} on />)}
        <Tool name="truss" />
      </div>
      <div className="mr-[14px] flex items-center gap-[2px] rounded-sm bg-[#fdfdfd] pr-[3px]">
        {grip}
        <div className="relative h-[25px] w-[86px]">
          <select aria-label="显示方案" className="size-full appearance-none border border-[#c3c3c3] bg-[#fdfdfd]"><option></option></select>
          <span className="pointer-events-none absolute top-[10px] right-1">{caret}</span>
        </div>
        <Tool name="sheetGrid" />
        <Tool name="sheetEye" />
      </div>
    </div>
  );
}

function StatusBar() {
  const sep = <span className="mx-1 h-4 w-px shrink-0 bg-[#c6c6c6]" />;
  const group = "flex shrink-0 gap-[2px]";
  return (
    <footer className="flex h-7 shrink-0 items-center bg-[#f0f0f0] pr-[7px] pb-px pl-1">
      <div className={group}>{["folder", "tiles", "windowAdd"].map((n) => <StatusTool key={n} name={n} />)}</div>
      {sep}
      <div className={group}>{["fit", "hand", "orbit", "zoom"].map((n) => <StatusTool key={n} name={n} />)}</div>
      {sep}
      <div className={group}>{["isoWire", "isoFull", "isoHalf", "isoShade", "isoSolid"].map((n) => <StatusTool key={n} name={n} on={n === "isoShade"} />)}</div>
      {sep}
      <div className={group}>{["clip", "hatch", "collapse"].map((n) => <StatusTool key={n} name={n} on={n === "hatch"} />)}</div>
      {sep}
      <button aria-label="缩小" className="flex w-6 justify-center"><span className="h-[2px] w-2 bg-[#aaa]" /></button>
      <input
        type="range"
        aria-label="缩放"
        defaultValue={50}
        className="h-4 w-16 appearance-none bg-[linear-gradient(#aaa,#aaa)] bg-[length:100%_1px] bg-center bg-no-repeat [&::-webkit-slider-thumb]:h-[14px] [&::-webkit-slider-thumb]:w-[5px] [&::-webkit-slider-thumb]:appearance-none [&::-webkit-slider-thumb]:border [&::-webkit-slider-thumb]:border-[#a5a5a5] [&::-webkit-slider-thumb]:bg-[#f0f0f0]"
      />
      <button aria-label="放大" className="flex w-6 justify-center"><svg viewBox="0 0 8 8" className="size-2 stroke-[#aaa]" strokeWidth="2"><path d="M4 0v8M0 4h8" /></svg></button>
      <span className="flex-[7]" />
      <output className="pb-[2px] text-xs whitespace-nowrap text-[#444]">892995.44 , -143150.02 , 0.00</output>
      <span className="flex-[10]" />
      <div className={group}>
        <StatusTool name="planeEye" />
        <StatusTool name="snapBox" on />
        <button aria-label="捕捉选项" className="-ml-[2px] w-[10px] rotate-180 text-[#666]">{chevron}</button>
        <StatusTool name="snapMid" on />
        <StatusTool name="snapAngle" on />
        {["ortho", "grid", "lockAxis", "gear"].map((n) => <StatusTool key={n} name={n} />)}
      </div>
    </footer>
  );
}

export default function App() {
  return (
    <div className={`flex h-screen flex-col overflow-hidden bg-[#f0f0f0] ${uiFont}`}>
      <TitleBar />
      <MenuBar />
      <Ribbon />
      <div className="flex min-h-0 flex-1">
        <div className="flex min-w-0 flex-1 flex-col">
          <Viewport />
          <ToolRow />
        </div>
        <WorkTree />
      </div>
      <StatusBar />
      {/* sliver of the desktop taskbar */}
      <div className="h-2 shrink-0 border-t border-[#4a4f58] bg-[linear-gradient(90deg,#1d222b_0%,#1a2030_15%,#10205c_42%,#12205a_60%,#1c212b_72%,#1c212b_100%)]" />
    </div>
  );
}
